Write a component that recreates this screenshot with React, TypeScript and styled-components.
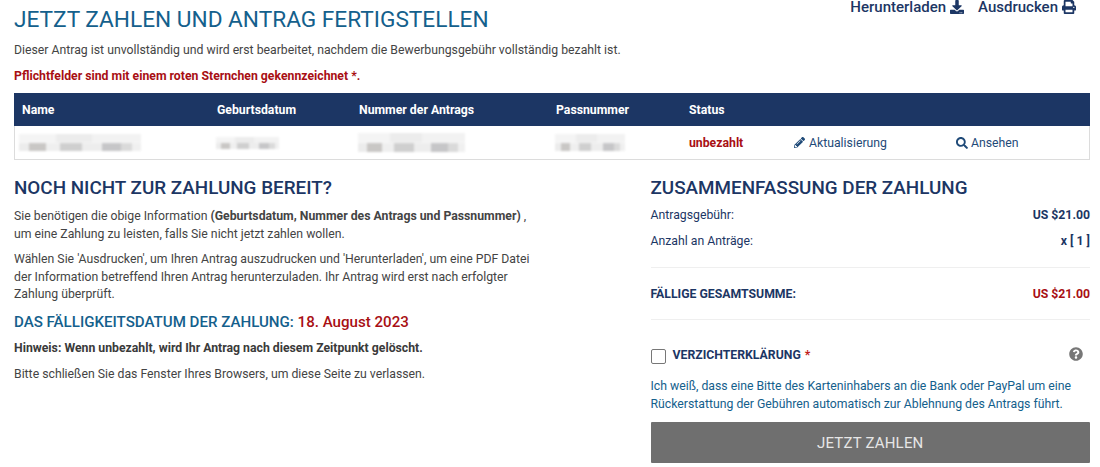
import React from 'react';
import styled, { createGlobalStyle } from 'styled-components';
import { FaDownload, FaPrint, FaPencilAlt, FaSearch, FaQuestionCircle } from 'react-icons/fa';

const navy = '#1c3664';
const teal = '#14608c';
const red = '#a80f14';
const text = '#444';
const link = '#1f4a78';

const GlobalStyle = createGlobalStyle`
  html, body { margin: 0; padding: 0; background: #fff; }
  body { font-family: Roboto, "Liberation Sans", sans-serif; font-size: 12.25px; color: ${text}; }
  * { box-sizing: border-box; }
`;

const Page = styled.div`
  width: 1100px;
  height: 467px;
  overflow: hidden;
  padding: 0 10px 0 14px;
`;

const TopBar = styled.div`
  display: flex;
  justify-content: space-between;
  align-items: flex-start;
  height: 42px;
`;

const Title = styled.h1`
  margin: 6px 0 0;
  font-size: 22.65px;
  line-height: 28px;
  font-weight: 400;
  color: ${teal};
`;

const Tools = styled.div`
  display: flex;
  gap: 14px;
  padding-right: 14px;
`;

const Tool = styled.a`
  display: flex;
  align-items: center;
  gap: 4px;
  height: 14px;
  line-height: 14px;
  font-size: 15px;
  font-weight: 500;
  color: ${navy};
  svg { font-size: 14px; }
`;

const Lead = styled.p`
  margin: 0 0 10px;
  line-height: 16px;
`;

const Required = styled.p`
  margin: 0 0 9px;
  line-height: 16px;
  font-weight: 700;
  color: ${red};
`;

const Table = styled.div`
  border: 1px solid #dcdcdc;
  border-top: 0;
`;

const Cols = styled.div`
  display: grid;
  grid-template-columns: 195px 142px 197px 133px 104px 162px 1fr;
  align-items: center;
  padding-left: 8px;
`;

const HeadRow = styled(Cols)`
  height: 33px;
  margin: 0 -1px;
  background: ${navy};
  color: #fff;
  font-weight: 700;
`;

const BodyRow = styled(Cols)`
  height: 33px;
`;

const Blur = styled.div<{ $w: number; $h: number; $x?: number }>`
  width: ${(p) => p.$w}px;
  height: ${(p) => p.$h}px;
  margin-left: ${(p) => p.$x ?? 0}px;
  filter: blur(0.8px);
  background:
    linear-gradient(90deg, #ececec 0 8%, #c9c7c5 8% 22%, #efefef 22% 34%, #cfcfcf 34% 52%, #ededed 52% 68%, #c6c6c8 68% 84%, #dadada 84% 93%, #f0f0f0 93%) 0 100% / 100% 50% no-repeat,
    linear-gradient(90deg, #f4f4f4 0 30%, #ececec 30% 60%, #f2f2f2 60%) 0 0 / 100% 50% no-repeat;
`;

const Unpaid = styled.span`
  margin-left: -1px;
  color: ${red};
  font-weight: 700;
`;

const RowLink = styled.a<{ $icon: number; $gap: number }>`
  display: flex;
  align-items: center;
  gap: ${(p) => p.$gap}px;
  color: ${link};
  svg { font-size: ${(p) => p.$icon}px; }
`;

const Columns = styled.div`
  display: grid;
  grid-template-columns: 636.5px 439.5px;
  margin-top: 16px;
`;

const LeftCol = styled.div`
  width: 520px;
`;

const SectionTitle = styled.h2<{ $gap: number }>`
  margin: 0 0 ${(p) => p.$gap}px;
  font-size: 18.85px;
  line-height: 24px;
  font-weight: 500;
  color: ${navy};
`;

const Para = styled.p`
  margin: 0 0 8px;
  line-height: 17.5px;
`;

const DueTitle = styled.h3`
  margin: 8px 0 8px;
  font-size: 15.1px;
  line-height: 20px;
  font-weight: 500;
  color: ${teal};
  span { color: ${red}; }
`;

const Note = styled.p`
  margin: 0 0 9px;
  line-height: 17.5px;
  font-weight: 700;
  color: #3a3a3a;
`;

const SumRow = styled.div`
  display: flex;
  justify-content: space-between;
  align-items: center;
  height: 26px;
  color: ${navy};
  b { font-weight: 700; }
`;

const Total = styled.div`
  display: flex;
  justify-content: space-between;
  align-items: center;
  height: 53px;
  margin-top: 13px;
  border-top: 1px solid #efefef;
  border-bottom: 1px solid #efefef;
  font-weight: 700;
  color: ${navy};
  em { font-style: normal; color: ${red}; }
`;

const WaiverRow = styled.div`
  display: flex;
  align-items: center;
  margin-top: 25px;
  height: 20px;
  padding-right: 7px;
  font-weight: 700;
  color: ${navy};
  i { font-style: normal; color: #c0201c; margin-left: 4px; }
  svg { margin-left: auto; font-size: 14px; color: #777; margin-top: -3px; }
`;

const Check = styled.span`
  width: 15px;
  height: 15px;
  margin: 3px 7px 0 0;
  border: 1px solid #777;
  border-radius: 2px;
`;

const Waiver = styled.p`
  margin: 13px 0 0;
  line-height: 17.5px;
  color: ${teal};
`;

const PayButton = styled.button`
  display: block;
  width: 100%;
  height: 41px;
  margin-top: 9px;
  border: 0;
  border-radius: 1px;
  background: #6f6f6f;
  color: #e6e6e6;
  font-family: inherit;
  font-size: 15px;
  letter-spacing: 0.2px;
`;

export default function App() {
  return (
    <Page>
      <GlobalStyle />
      <TopBar>
        <Title>JETZT ZAHLEN UND ANTRAG FERTIGSTELLEN</Title>
        <Tools>
          <Tool>Herunterladen <FaDownload /></Tool>
          <Tool>Ausdrucken <FaPrint /></Tool>
        </Tools>
      </TopBar>
      <Lead>Dieser Antrag ist unvollständig und wird erst bearbeitet, nachdem die Bewerbungsgebühr vollständig bezahlt ist.</Lead>
      <Required>Pflichtfelder sind mit einem roten Sternchen gekennzeichnet *.</Required>
      <Table>
        <HeadRow>
          <span>Name</span>
          <span>Geburtsdatum</span>
          <span>Nummer der Antrags</span>
          <span>Passnummer</span>
          <span>Status</span>
        </HeadRow>
        <BodyRow>
          <Blur $w={122} $h={17} $x={-4} />
          <Blur $w={63} $h={12} $x={-2} />
          <Blur $w={107} $h={19} $x={-2} />
          <Blur $w={70} $h={17} $x={-2} />
          <Unpaid>unbezahlt</Unpaid>
          <RowLink $icon={11} $gap={4}><FaPencilAlt /> Aktualisierung</RowLink>
          <RowLink $icon={12} $gap={3}><FaSearch /> Ansehen</RowLink>
        </BodyRow>
      </Table>
      <Columns>
        <LeftCol>
          <SectionTitle $gap={8}>NOCH NICHT ZUR ZAHLUNG BEREIT?</SectionTitle>
          <Para>
            Sie benötigen die obige Information <b>(Geburtsdatum, Nummer des Antrags und Passnummer)</b> , um eine Zahlung zu leisten, falls Sie nicht jetzt zahlen wollen.
          </Para>
          <Para>
            Wählen Sie 'Ausdrucken', um Ihren Antrag auszudrucken und 'Herunterladen', um eine PDF Datei der Information betreffend Ihren Antrag herunterzuladen. Ihr Antrag wird erst nach erfolgter Zahlung überprüft.
          </Para>
          <DueTitle>DAS FÄLLIGKEITSDATUM DER ZAHLUNG: <span>18. August 2023</span></DueTitle>
          <Note>Hinweis: Wenn unbezahlt, wird Ihr Antrag nach diesem Zeitpunkt gelöscht.</Note>
          <Para>Bitte schließen Sie das Fenster Ihres Browsers, um diese Seite zu verlassen.</Para>
        </LeftCol>
        <div>
          <SectionTitle $gap={2}>ZUSAMMENFASSUNG DER ZAHLUNG</SectionTitle>
          <SumRow><span>Antragsgebühr:</span><b>US $21.00</b></SumRow>
          <SumRow><span>Anzahl an Anträge:</span><b>x [ 1 ]</b></SumRow>
          <Total><span>FÄLLIGE GESAMTSUMME:</span><em>US $21.00</em></Total>
          <WaiverRow><Check />VERZICHTERKLÄRUNG <i>*</i><FaQuestionCircle /></WaiverRow>
          <Waiver>Ich weiß, dass eine Bitte des Karteninhabers an die Bank oder PayPal um eine Rückerstattung der Gebühren automatisch zur Ablehnung des Antrags führt.</Waiver>
          <PayButton>JETZT ZAHLEN</PayButton>
        </div>
      </Columns>
    </Page>
  );
}
